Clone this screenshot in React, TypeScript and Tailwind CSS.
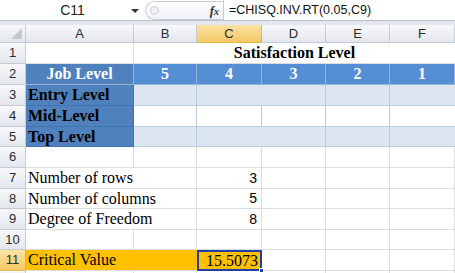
import React from 'react';

const serif = "font-['Liberation_Serif','Times_New_Roman',serif]";
const sans = "font-['Liberation_Sans',Arial,sans-serif]";
const grid = 'border-r border-b border-[#dadcdd]';
const blueLine = 'border-r border-b border-[#95b3d7]';
const headCell =
  'flex items-center justify-center border-r border-b border-[#c5cbd4] bg-gradient-to-b from-[#f7f8fa] to-[#e3e7ed] text-[13px] text-[#2b2b2b]';
const headSel =
  'flex items-center justify-center border-r border-b border-[#e0b64e] bg-gradient-to-b from-[#fbe3a4] to-[#f4c862] text-[13px] text-[#2b2b2b]';

const RowHead: React.FC<{ n?: number; selected?: boolean }> = ({ n, selected }) => (
  <div className={selected ? headSel : headCell}>{n}</div>
);

const Num: React.FC<{ v: string }> = ({ v }) => (
  <div className={`${grid} flex items-center justify-end pr-[4px] text-[14px] ${sans}`}>{v}</div>
);

const Empty: React.FC<{ extra?: string }> = ({ extra = '' }) => <div className={`${grid} ${extra}`} />;

export default function App() {
  return (
    <div className={`w-[455px] h-[273px] overflow-hidden bg-white ${sans} text-black`}>
      {/* formula bar */}
      <div className="h-[25px] bg-[#e4e8ee] pb-[4px]">
        <div className="flex h-[21px] bg-white border-b border-[#b9c0ca]">
          <div className="relative w-[145px] flex items-center justify-center text-[14px] text-[#222]">
            C11
            <span className="absolute right-[6px] top-[9px] w-0 h-0 border-l-[4px] border-r-[4px] border-t-[4px] border-l-transparent border-r-transparent border-t-[#333]" />
          </div>
          <div className="w-[78px] h-[19px] mt-[1px] flex items-center justify-between pl-[4px] pr-[4px] rounded-l-full border border-r-0 border-[#c6ccd4] bg-gradient-to-b from-[#ffffff] to-[#eef1f5]">
            <span className="w-[9px] h-[9px] rounded-full border border-[#c9ced6] bg-[#eef0f3]" />
            <span className={`${serif} italic font-bold text-[13px] text-[#333]`}>
              f<span className="text-[10px]">x</span>
            </span>
          </div>
          <div className="flex-1 flex items-center border-l border-[#c6ccd4] pl-[5px] text-[12.5px] text-[#111]">
            =CHISQ.INV.RT(0.05,C9)
          </div>
        </div>
      </div>

      {/* sheet */}
      <div className="grid grid-cols-[26px_108px_63px_65px_64px_64px_65px] grid-rows-[18px_21px_21px_21px_21px_20px_21px_21px_20px_21px_20px_21px_10px]">
        {/* column headers */}
        <div className={`${headCell} relative`}>
          <svg className="absolute right-[3px] bottom-[3px]" width="11" height="11" viewBox="0 0 11 11">
            <polygon points="11,0 11,11 0,11" fill="#c4c9d0" />
          </svg>
        </div>
        {['A', 'B'].map(c => (
          <div key={c} className={headCell}>{c}</div>
        ))}
        <div className={headSel}>C</div>
        {['D', 'E', 'F'].map(c => (
          <div key={c} className={headCell}>{c}</div>
        ))}

        {/* row 1 */}
        <RowHead n={1} />
        <Empty />
        <div className={`col-span-5 border-b border-[#dadcdd] flex items-center justify-center ${serif} font-bold text-[16px]`}>
          Satisfaction Level
        </div>

        {/* row 2 */}
        <RowHead n={2} />
        <div className={`bg-[#4f81bd] ${blueLine} flex items-center justify-center ${serif} font-bold text-[16px] text-white`}>
          Job Level
        </div>
        {['5', '4', '3', '2', '1'].map(v => (
          <div key={v} className={`bg-[#558ed5] ${blueLine} flex items-center justify-center ${serif} font-bold text-[16px] text-white`}>
            {v}
          </div>
        ))}

        {/* rows 3-5 */}
        {[
          ['Entry Level', true],
          ['Mid-Level', false],
          ['Top Level', true],
        ].map(([label, band], i) => (
          <React.Fragment key={label as string}>
            <RowHead n={i + 3} />
            <div className={`bg-[#4f81bd] border-r border-b border-[#4373ae] flex items-center pl-[2px] ${serif} font-bold text-[16px]`}>
              {label}
            </div>
            {band ? (
              <>
                <div className="bg-[#dce6f1] border-r border-b border-[#b8cce4]" />
                <div className="bg-[#dce6f1] border-b border-[#b8cce4]" />
                <div className="bg-[#dce6f1] border-r border-b border-[#b8cce4]" />
                <div className="bg-[#dce6f1] border-r border-b border-[#b8cce4]" />
                <div className="bg-[#dce6f1] border-b border-[#b8cce4]" />
              </>
            ) : (
              <>
                <div className="border-r border-b border-[#b8cce4]" />
                <div className="border-r border-b border-[#b8cce4]" />
                <div className="border-r border-b border-[#b8cce4]" />
                <div className="border-r border-b border-[#b8cce4]" />
                <div className="border-b border-[#b8cce4]" />
              </>
            )}
          </React.Fragment>
        ))}

        {/* row 6 */}
        <RowHead n={6} />
        <Empty />
        <Empty />
        <Empty />
        <Empty />
        <Empty />
        <Empty />

        {/* rows 7-9 */}
        {[
          ['Number of rows', '3'],
          ['Number of columns', '5'],
          ['Degree of Freedom', '8'],
        ].map(([label, v], i) => (
          <React.Fragment key={label}>
            <RowHead n={i + 7} />
            <div className={`col-span-2 border-r border-b border-[#dadcdd] flex items-center pl-[2px] ${serif} text-[16px] whitespace-nowrap`}>
              {label}
            </div>
            <Num v={v} />
            <Empty />
            <Empty />
            <Empty />
          </React.Fragment>
        ))}

        {/* row 10 */}
        <RowHead n={10} />
        <Empty />
        <Empty />
        <Empty />
        <Empty />
        <Empty />
        <Empty />

        {/* row 11 */}
        <RowHead n={11} selected />
        <div className={`col-span-2 bg-[#ffc000] border-b border-[#dadcdd] flex items-center pl-[2px] ${serif} text-[16px]`}>
          Critical Value
        </div>
        <div className={`relative bg-[#ffc000] border-2 border-[#1f3fa3] flex items-center justify-end pr-[2px] ${serif} text-[16px]`}>
          15.5073
          <span className="absolute right-[-4px] bottom-[-4px] w-[5px] h-[5px] bg-[#1f3fa3] border border-white" />
        </div>
        <Empty />
        <Empty />
        <Empty />

        {/* row 12, cut off by the window */}
        <RowHead />
        <Empty />
        <Empty />
        <Empty />
        <Empty />
        <Empty />
        <Empty />
      </div>
    </div>
  );
}
